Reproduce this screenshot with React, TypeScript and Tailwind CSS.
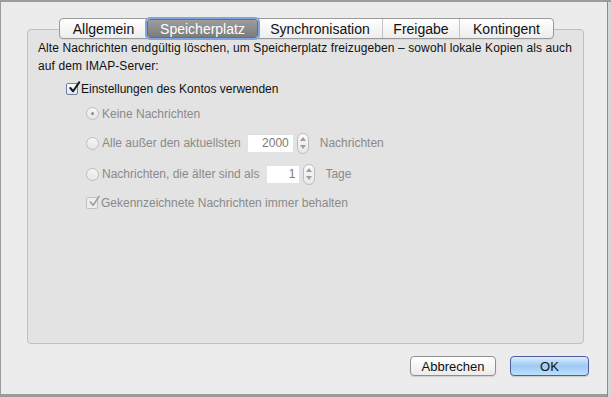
import React from 'react';

const font = { fontFamily: '"Liberation Sans", Arial, sans-serif' };

const tabs = ['Allgemein', 'Speicherplatz', 'Synchronisation', 'Freigabe', 'Kontingent'];
const tabWidths = ['w-[87px]', 'w-[111px]', 'w-[124px]', 'w-[77px]', 'w-[94px]'];

const Radio: React.FC<{ checked?: boolean }> = ({ checked }) => (
  <span className="w-[13px] h-[13px] rounded-full border border-[#bdbdbd] bg-gradient-to-b from-[#f6f6f6] to-[#e6e6e6] flex items-center justify-center shrink-0">
    {checked && <span className="w-[3px] h-[3px] rounded-full bg-[#8c8c8c]" />}
  </span>
);

const Check: React.FC<{ disabled?: boolean }> = ({ disabled }) => (
  <span
    className={`relative w-[12px] h-[12px] rounded-[2px] border shrink-0 ${
      disabled ? 'border-[#c2c2c2] bg-[#ededed]' : 'border-[#6f7fa8] bg-gradient-to-b from-[#ffffff] to-[#dfe6f2]'
    }`}
  >
    <svg viewBox="0 0 14 14" className="absolute -top-[3px] left-[1px] w-[13px] h-[13px]">
      <path
        d="M2.5 7.5 L5.5 11 L12 1.5"
        fill="none"
        stroke={disabled ? '#9a9a9a' : '#1a1a1a'}
        strokeWidth={disabled ? 1.6 : 2.2}
        strokeLinecap="round"
        strokeLinejoin="round"
      />
    </svg>
  </span>
);

const Stepper: React.FC = () => (
  <span className="w-[12px] h-[21px] rounded-[6px] border border-[#bdbdbd] bg-gradient-to-b from-[#fafafa] to-[#e8e8e8] flex flex-col items-center justify-center gap-[4px] shrink-0">
    <svg viewBox="0 0 6 4" className="w-[6px] h-[4px]">
      <path d="M0 4 L3 0 L6 4 Z" fill="#9e9e9e" />
    </svg>
    <svg viewBox="0 0 6 4" className="w-[6px] h-[4px]">
      <path d="M0 0 L3 4 L6 0 Z" fill="#9e9e9e" />
    </svg>
  </span>
);

export default function App() {
  return (
    <div className="w-[611px] h-[397px] bg-[#9c9c9c] flex overflow-hidden" style={font}>
      <div className="ml-[1px] mt-[2px] w-[606px] h-[392px] bg-[#ececec] flex flex-col">
        {/* tab strip */}
        <div className="mt-[16px] flex pl-[58px] relative z-10">
          <div className="flex h-[21px] rounded-[4px] border border-[#9a9a9a] bg-gradient-to-b from-[#ffffff] to-[#ededed] shadow-[0_1px_0_rgba(0,0,0,0.05)]">
            {tabs.map((t, i) => {
              const sel = t === 'Speicherplatz';
              return (
                <div
                  key={t}
                  className={`${tabWidths[i]} flex items-center justify-center text-[14px] leading-none ${
                    sel
                      ? 'bg-gradient-to-b from-[#9d9d9d] to-[#7c7c7c] text-white rounded-[3px] outline outline-[2px] outline-[#7fa6dc] border border-[#5f6f8a]'
                      : 'text-[#111] border-l border-[#c4c4c4] first:border-l-0'
                  } ${i === 2 ? 'border-l-0' : ''}`}
                >
                  {t}
                </div>
              );
            })}
          </div>
        </div>

        {/* tab box */}
        <div className="-mt-[10px] ml-[26px] w-[557px] h-[315px] rounded-[4px] border border-[#bfbfbf] bg-[#e3e3e3] pt-[9px] pl-[10px] text-[12px] text-[#111]">
          <p className="leading-[18px] tracking-[0.1px]">
            Alte Nachrichten endgültig löschen, um Speicherplatz freizugeben – sowohl lokale Kopien als auch
            <br />
            auf dem IMAP-Server:
          </p>

          <div className="mt-[5px] ml-[28px] flex items-center gap-[3px] h-[17px]">
            <Check />
            <span>Einstellungen des Kontos verwenden</span>
          </div>

          <div className="ml-[48px] text-[#8a8a8a]">
            <div className="mt-[8px] flex items-center gap-[3px] h-[17px]">
              <Radio checked />
              <span>Keine Nachrichten</span>
            </div>

            <div className="mt-[10px] flex items-center h-[22px]">
              <Radio />
              <span className="ml-[3px]">Alle außer den aktuellsten</span>
              <span className="ml-[7px] w-[45px] h-[18px] bg-white text-right pr-[4px] leading-[18px] text-[#7a7a7a] shadow-[inset_0_1px_0_#e0e0e0]">
                2000
              </span>
              <span className="ml-[4px]">
                <Stepper />
              </span>
              <span className="ml-[11px]">Nachrichten</span>
            </div>

            <div className="mt-[9px] flex items-center h-[22px]">
              <Radio />
              <span className="ml-[3px]">Nachrichten, die älter sind als</span>
              <span className="ml-[8px] w-[32px] h-[18px] bg-white text-right pr-[4px] leading-[18px] text-[#7a7a7a] shadow-[inset_0_1px_0_#e0e0e0]">
                1
              </span>
              <span className="ml-[4px]">
                <Stepper />
              </span>
              <span className="ml-[10px]">Tage</span>
            </div>

            <div className="mt-[9px] flex items-center gap-[3px] h-[17px]">
              <Check disabled />
              <span>Gekennzeichnete Nachrichten immer behalten</span>
            </div>
          </div>
        </div>

        {/* buttons */}
        <div className="mt-[12px] flex justify-end gap-[14px] pr-[18px] text-[13px]">
          <button className="w-[86px] h-[20px] rounded-[4px] border border-[#8f8f8f] bg-gradient-to-b from-[#ffffff] to-[#ececec] text-[#111] leading-none shadow-[0_1px_1px_rgba(0,0,0,0.12)]">
            Abbrechen
          </button>
          <button className="w-[79px] h-[20px] rounded-[4px] border border-[#4e5d9e] bg-gradient-to-b from-[#dcecfc] via-[#9dcaf6] to-[#bfe0fb] text-[#111] leading-none shadow-[0_1px_1px_rgba(0,0,0,0.15)]">
            OK
          </button>
        </div>
      </div>
      <div className="flex-1 mt-[2px] bg-[#d6d6d6] border-l border-[#8a8a8a]" />
    </div>
  );
}
